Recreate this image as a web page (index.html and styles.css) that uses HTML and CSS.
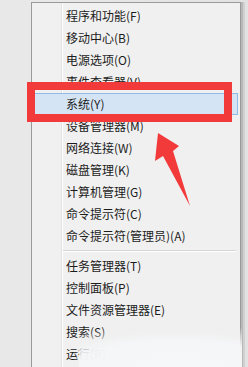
FILE: index.html
```html
<!DOCTYPE html>
<html>
<head>
<meta charset="utf-8">
<link rel="stylesheet" href="styles.css">
</head>
<body>
<div class="stage">
  <div class="menu">
    <div class="item">程序和功能(F)</div>
    <div class="item">移动中心(B)</div>
    <div class="item">电源选项(O)</div>
    <div class="item">事件查看器(V)</div>
    <div class="item hot">系统(Y)</div>
    <div class="item">设备管理器(M)</div>
    <div class="item">网络连接(W)</div>
    <div class="item">磁盘管理(K)</div>
    <div class="item">计算机管理(G)</div>
    <div class="item">命令提示符(C)</div>
    <div class="item">命令提示符(管理员)(A)</div>
    <div class="sep"></div>
    <div class="item">任务管理器(T)</div>
    <div class="item">控制面板(P)</div>
    <div class="item">文件资源管理器(E)</div>
    <div class="item">搜索(S)</div>
    <div class="item">运行(R)</div>
  </div>
  <div class="haze"></div>
  <div class="redbox"></div>
  <svg class="arrow" width="248" height="367" viewBox="0 0 248 367">
    <polygon points="158,133 179,146 173,151 190,206 163,156 155,161" fill="#f23a3a"/>
  </svg>
</div>
</body>
</html>
```
FILE: styles.css
```css
html, body {
  margin: 0;
  padding: 0;
}
body {
  background: #e6e6e6;
  width: 248px;
  height: 367px;
  overflow: hidden;
  font-family: "Noto Sans CJK SC", "Microsoft YaHei", sans-serif;
}
.stage {
  position: relative;
  width: 248px;
  height: 367px;
  overflow: hidden;
  padding-top: 2px;
  box-sizing: border-box;
  background: linear-gradient(to right, #e8e8e8 0, #e8e8e8 31px, #e2e2e2 245px);
}
.menu {
  margin-left: 31px;
  width: 208px;
  height: 400px;
  border: 1px solid #9a9a9a;
  background-color: #f0f0f0;
  background-image: linear-gradient(to right, transparent 29px, #e2e2e2 29px, #e2e2e2 30px, #ffffff 30px, #ffffff 31px, transparent 31px);
  box-shadow: 2px 0 0 #b8b8b8, 4px 0 0 #d0d0d0;
  padding-top: 2px;
  box-sizing: content-box;
}
.item {
  height: 22px;
  line-height: 22px;
  padding-left: 34px;
  font-size: 12px;
  color: #1c1c1c;
  white-space: nowrap;
}
.item.hot {
  margin: 0 2px 0 1px;
  height: 20px;
  line-height: 20px;
  padding-left: 32px;
  border: 1px solid #8fbbe6;
  background: #d5e4f4;
}
.sep {
  height: 8px;
  margin-left: 31px;
  margin-right: 4px;
  background: linear-gradient(to bottom, transparent 3px, #d4d4d4 3px, #d4d4d4 4px, #ffffff 4px, #ffffff 5px, transparent 5px);
}
.redbox {
  position: absolute;
  left: 27px;
  top: 82px;
  width: 205px;
  height: 40px;
  border: 8px solid #f23a3a;
  box-sizing: border-box;
}
.arrow {
  position: absolute;
  left: 0;
  top: 0;
}
.haze {
  position: absolute;
  left: 79px;
  top: 312px;
  width: 163px;
  height: 56px;
  background: radial-gradient(ellipse 165px 44px at 60% 100%, rgba(246,247,249,1) 0, rgba(245,246,248,0.97) 62%, rgba(240,240,240,0.55) 82%, rgba(240,240,240,0) 100%);
}
```
